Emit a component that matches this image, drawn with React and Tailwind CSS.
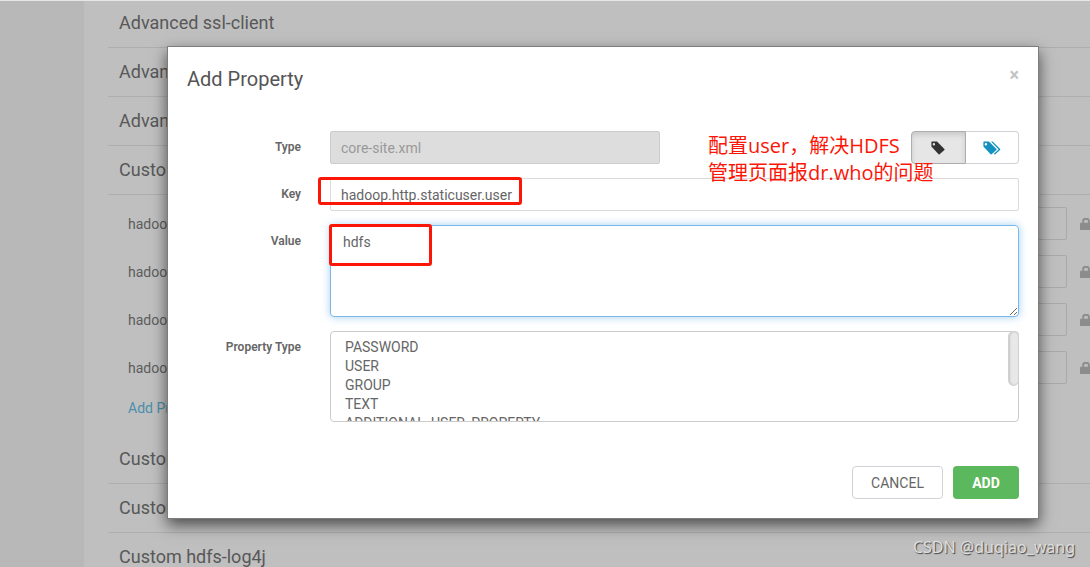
import { useState } from "react"

const topSections = ["Advanced ssl-client", "Advanced ssl-server", "Advanced viewfs-mount-table", "Custom core-site"]
const bottomSections = ["Custom hadoop-metrics2", "Custom hadoop-policy", "Custom hdfs-log4j"]
const proxyProps = [
  "hadoop.proxyuser.hdfs.groups",
  "hadoop.proxyuser.hdfs.hosts",
  "hadoop.proxyuser.root.groups",
  "hadoop.proxyuser.root.hosts",
]
const propertyTypes = ["PASSWORD", "USER", "GROUP", "TEXT", "ADDITIONAL_USER_PROPERTY"]

function TagIcon() {
  return (
    <svg viewBox="0 0 14 14" className="w-[14px] h-[14px]" fill="currentColor" aria-hidden="true">
      <path fillRule="evenodd" d="M.4 1V5.4L7.6 13.2Q8.1 13.7 8.6 13.2L13.4 9Q13.9 8.5 13.4 8L6 .6H.8Q.4 .6 .4 1ZM2.9 2A1.2 1.2 0 1 1 2.9 4.4A1.2 1.2 0 1 1 2.9 2Z" />
    </svg>
  )
}

function TagsIcon() {
  return (
    <svg viewBox="0 0 18 14" className="w-[18px] h-[14px]" fill="currentColor" aria-hidden="true">
      <path fillRule="evenodd" d="M.4 1V5.4L7.6 13.2Q8.1 13.7 8.6 13.2L13.4 9Q13.9 8.5 13.4 8L6 .6H.8Q.4 .6 .4 1ZM2.9 2A1.2 1.2 0 1 1 2.9 4.4A1.2 1.2 0 1 1 2.9 2Z" />
      <path d="M8 .6H9.6L17.1 8Q17.6 8.5 17.1 9L12.3 13.2Q11.8 13.7 11.3 13.2L10.9 12.8L15.6 8.5Z" />
    </svg>
  )
}

function LockIcon() {
  return (
    <svg viewBox="0 0 12 12" className="w-3 h-3 shrink-0" aria-hidden="true">
      <path d="M3.2 5V2.8Q3.2 1 5 1H7Q8.8 1 8.8 2.8V5" fill="none" stroke="currentColor" strokeWidth="1.8" />
      <rect x="0" y="4.8" width="12" height="7.2" rx="0.8" fill="currentColor" />
    </svg>
  )
}

function Section({ title }) {
  return (
    <h4 className="h-[49px] px-[11px] flex items-center border-b border-[#aeaeae] text-lg text-[#585858]">{title}</h4>
  )
}

function Row({ label, id, children }) {
  return (
    <div className="flex items-start mb-[14px]">
      <label htmlFor={id} className="w-[114px] mr-[29px] pt-2 shrink-0 text-right text-xs leading-4 font-semibold text-[#666]">
        {label}
      </label>
      {children}
    </div>
  )
}

function App() {
  const [key, setKey] = useState("hadoop.http.staticuser.user")
  const [value, setValue] = useState("hdfs")
  const [single, setSingle] = useState(true)

  return (
    <div className="relative h-screen overflow-hidden bg-[#bfbfbf] font-['Roboto',sans-serif] border-t border-[#e6e6e6]">
      <div className="flex min-h-full">
        <div className="w-[84px] shrink-0 bg-[#b8b8b8]"></div>
        <div className="flex-1 pl-6 -mt-[2px]">
          {topSections.map((s) => (
            <Section key={s} title={s} />
          ))}
          <div className="pl-5 pt-3">
            {proxyProps.map((p) => (
              <div key={p} className="flex items-center mb-[15px] text-sm text-[#5c5c5c]">
                <label htmlFor={p} className="w-[240px]">{p}</label>
                <input id={p} readOnly value="*" className="flex-1 h-[33px] px-3 border border-[#a9a9a9] rounded-xs" />
                <span className="w-[23px] pl-[13px] flex text-[#8c8c8c]"><LockIcon /></span>
              </div>
            ))}
            <a href="#add" className="block h-9 text-sm leading-[18px] text-[#4a8eac]">Add Property ...</a>
          </div>
          {bottomSections.map((s) => (
            <Section key={s} title={s} />
          ))}
        </div>
      </div>

      <div className="absolute inset-0 pt-[45px] pl-[167px] pr-[51px]">
        <div role="dialog" aria-label="Add Property" className="relative bg-white border border-[#7d7d7d] px-[19px] pb-[19px] shadow-[0_6px_14px_rgba(0,0,0,0.6)]">
          <div className="flex justify-between items-start pt-[18px]">
            <h3 className="text-xl leading-7 text-[#555]">Add Property</h3>
            <button aria-label="Close" className="text-lg leading-5 font-bold text-[#c4c4c4]">×</button>
          </div>

          <form className="pt-[38px]" onSubmit={(e) => e.preventDefault()}>
            <Row label="Type" id="type">
              <div className="flex flex-1 justify-between">
                <select id="type" disabled className="appearance-none w-[330px] h-[33px] px-[10px] bg-[#ddd] border border-[#ccc] rounded-xs text-sm text-[#999] opacity-100">
                  <option>core-site.xml</option>
                </select>
                <div className="flex w-[108px] h-[33px]">
                  <button
                    type="button"
                    aria-label="Single property"
                    onClick={() => setSingle(true)}
                    className="flex-1 flex items-center justify-center rounded-l border border-[#adadad] bg-[#e6e6e6] text-[#333] shadow-[inset_0_3px_5px_rgba(0,0,0,0.125)]"
                  >
                    <TagIcon />
                  </button>
                  <button
                    type="button"
                    aria-label="Bulk properties"
                    onClick={() => setSingle(!single)}
                    className="flex-1 flex items-center justify-center rounded-r border border-l-0 border-[#cfd3d7] bg-white text-[#1491c1]"
                  >
                    <TagsIcon />
                  </button>
                </div>
              </div>
            </Row>
            <Row label="Key" id="key">
              <input
                id="key"
                value={key}
                onChange={(e) => setKey(e.target.value)}
                className="flex-1 h-[33px] px-[10px] border border-[#d9dbdf] rounded-xs text-sm text-[#666]"
              />
            </Row>
            <Row label="Value" id="value">
              <textarea
                id="value"
                value={value}
                onChange={(e) => setValue(e.target.value)}
                className="flex-1 h-[92px] px-3 py-[6px] border border-[#7ab8ea] rounded outline-none text-sm text-[#666] shadow-[0_0_8px_rgba(102,175,233,0.6)]"
              />
            </Row>
            <Row label="Property Type" id="ptype">
              <div className="relative flex flex-1">
                <select id="ptype" multiple className="flex-1 h-[91px] px-3 py-[7px] overflow-y-auto [scrollbar-width:none] border border-[#ccc] rounded text-sm text-[#666]">
                  {propertyTypes.map((t) => (
                    <option key={t} className="h-[19px] min-h-0 p-0 px-[2px] leading-[19px]">{t}</option>
                  ))}
                </select>
                <div className="absolute right-0 top-0 w-[11px] h-[55px] rounded-full border border-[#d0d0d0] bg-[#e8e8e8] shadow-[inset_1px_0_2px_rgba(0,0,0,0.15)]"></div>
              </div>
            </Row>
          </form>

          <div className="flex justify-end gap-[10px] pt-[30px]">
            <button className="w-[91px] h-[33px] border border-[#cfd3d7] rounded text-sm text-[#666]">CANCEL</button>
            <button className="w-[66px] h-[33px] rounded bg-[#5cb85c] text-sm font-bold text-white">ADD</button>
          </div>

          {/* red marker notes */}
          <div className="absolute left-[150px] top-[130px] w-[204px] h-7 border-3 border-[#fb1607] rounded-[3px]"></div>
          <div className="absolute left-[161px] top-[177px] w-[103px] h-[42px] border-3 border-[#fb1607] rounded-[3px]"></div>
          <p className="absolute right-[98px] top-[85px] w-[232px] text-xl leading-[27px] whitespace-nowrap text-[#fb1607] font-['Open_Sans','Noto_Sans_CJK_SC',sans-serif]">
            配置user，解决HDFS
            <br />
            管理页面报dr.who的问题
          </p>
        </div>
      </div>

      <span className="absolute right-[15px] bottom-2 text-base leading-6 text-[#dedede] font-['Noto_Sans',sans-serif] [text-shadow:1px_1px_1px_#444]">
        CSDN @duqiao_wang
      </span>
    </div>
  )
}

export default App
